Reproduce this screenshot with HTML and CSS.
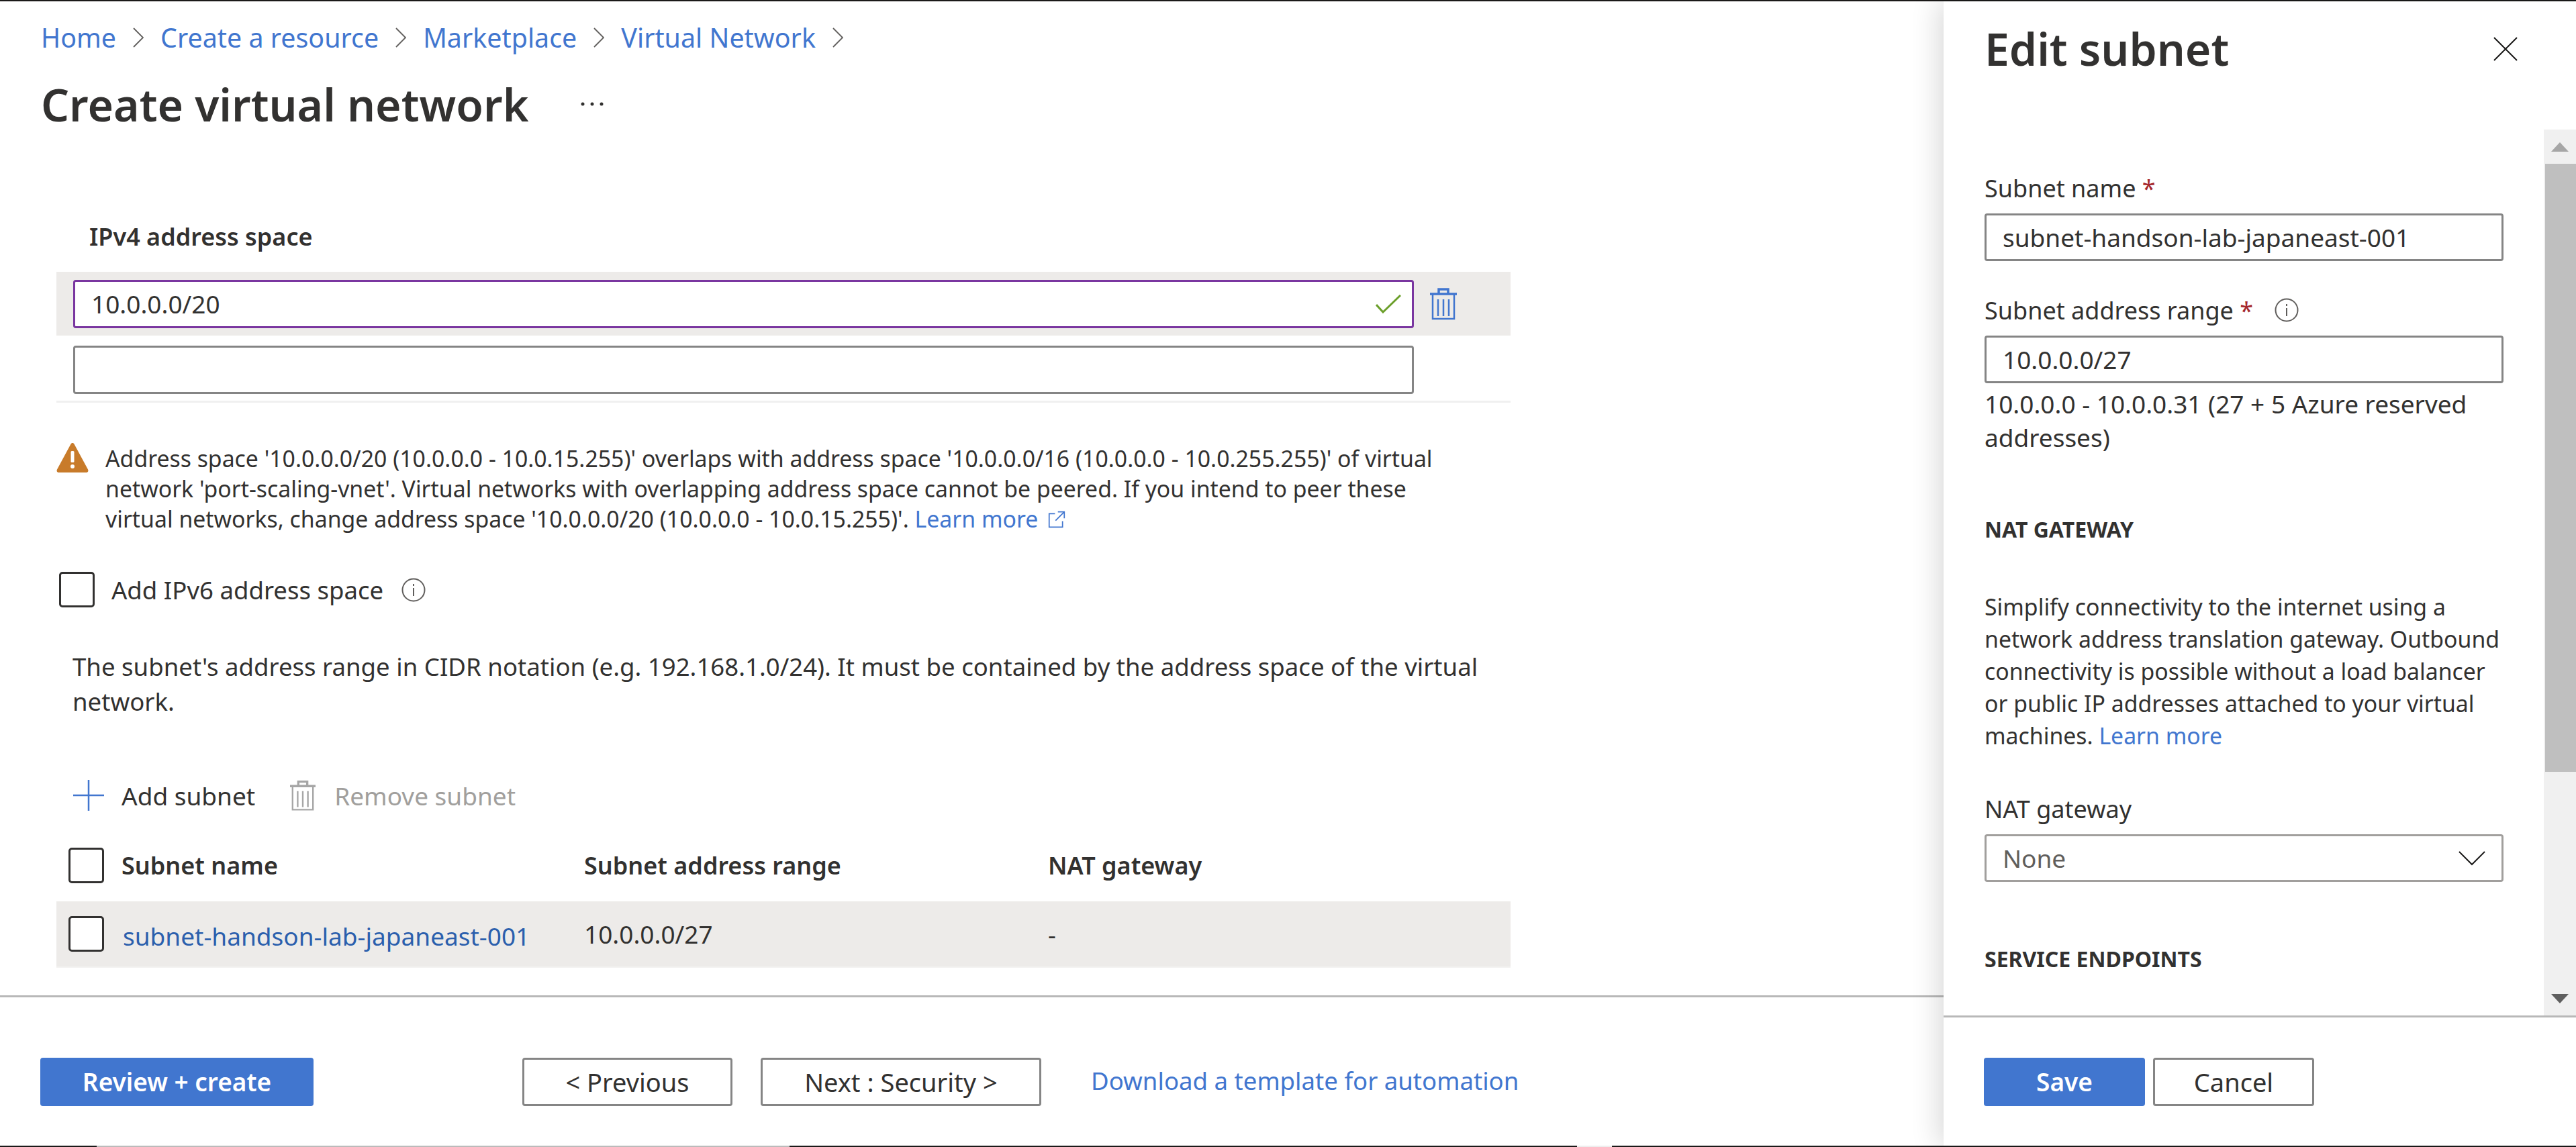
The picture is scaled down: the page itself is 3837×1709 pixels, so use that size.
FILE: index.html
```html
<!DOCTYPE html>
<html lang="en">
<head>
    <meta charset="UTF-8">
    <title>Create virtual network</title>
    <link rel="stylesheet" href="styles.css">
</head>
<body>
<div class="page">
    <div class="top-line"></div>
    <div class="workspace">
        <main class="main">
            <div class="main-body">
                <nav class="breadcrumb">
                    <a class="crumb">Home</a>
                    <svg class="crumb-sep" viewBox="0 0 16 30"><path d="M1 1l14 14L1 29"/></svg>
                    <a class="crumb">Create a resource</a>
                    <svg class="crumb-sep" viewBox="0 0 16 30"><path d="M1 1l14 14L1 29"/></svg>
                    <a class="crumb">Marketplace</a>
                    <svg class="crumb-sep" viewBox="0 0 16 30"><path d="M1 1l14 14L1 29"/></svg>
                    <a class="crumb">Virtual Network</a>
                    <svg class="crumb-sep" viewBox="0 0 16 30"><path d="M1 1l14 14L1 29"/></svg>
                </nav>

                <div class="title-row">
                    <h1 class="page-title">Create virtual network</h1>
                    <svg class="more" viewBox="0 0 34 6"><circle cx="3" cy="3" r="2.5"/><circle cx="17" cy="3" r="2.5"/><circle cx="31" cy="3" r="2.5"/></svg>
                </div>

                <div class="address-label">IPv4 address space</div>
                <div class="address-row address-row-active">
                    <div class="field field-active">
                        <span>10.0.0.0/20</span>
                        <svg class="check" viewBox="0 0 38 28"><path d="M1 15l10 11L37 1"/></svg>
                    </div>
                    <svg class="trash trash-blue" viewBox="0 0 40 48"><path class="lid" d="M0 9h40M13 8V2h14v6"/><path d="M4 10v36h32V10M12 17v25M20 17v25M28 17v25"/></svg>
                </div>
                <div class="address-row">
                    <div class="field"></div>
                </div>

                <div class="warning">
                    <svg class="warning-icon" viewBox="0 0 48 44">
                        <path d="M24 0c1 0 2 .6 3 2.500l20 37c1 2 .3 4.500-2.500 4.500h-41C.8 44 0 41.500 1 39.500l20-37C22 .6 23 0 24 0z"/>
                        <rect x="21.500" y="12" width="5" height="17" rx="1.500"/>
                        <circle cx="24" cy="35" r="3"/>
                    </svg>
                    <p class="warning-text">Address space '10.0.0.0/20 (10.0.0.0 - 10.0.15.255)' overlaps with address space '10.0.0.0/16 (10.0.0.0 - 10.0.255.255)' of virtual<br>network 'port-scaling-vnet'. Virtual networks with overlapping address space cannot be peered. If you intend to peer these<br>virtual networks, change address space '10.0.0.0/20 (10.0.0.0 - 10.0.15.255)'. <a class="link">Learn more</a>
                        <svg class="external" viewBox="0 0 30 30"><path d="M12 5H2v23h23V18M17 2h11v11M28 2L13 17"/></svg>
                    </p>
                </div>

                <div class="ipv6-row">
                    <span class="checkbox"></span>
                    <span class="ipv6-label">Add IPv6 address space</span>
                    <svg class="info" viewBox="0 0 36 36"><circle cx="18" cy="18" r="16.500"/><path d="M18 15v12M18 9v3"/></svg>
                </div>

                <p class="hint">The subnet's address range in CIDR notation (e.g. 192.168.1.0/24). It must be contained by the address space of the virtual<br>network.</p>

                <div class="toolbar">
                    <span class="tool">
                        <svg class="plus" viewBox="0 0 46 46"><path d="M23 0v46M0 23h46"/></svg>
                        Add subnet
                    </span>
                    <span class="tool tool-disabled">
                        <svg class="trash trash-grey" viewBox="0 0 40 48"><path class="lid" d="M0 9h40M13 8V2h14v6"/><path d="M4 10v36h32V10M12 17v25M20 17v25M28 17v25"/></svg>
                        Remove subnet
                    </span>
                </div>

                <div class="subnet-grid subnet-head">
                    <span class="checkbox"></span>
                    <span>Subnet name</span>
                    <span>Subnet address range</span>
                    <span>NAT gateway</span>
                </div>
                <div class="subnet-grid subnet-row">
                    <span class="checkbox"></span>
                    <a class="subnet-link">subnet-handson-lab-japaneast-001</a>
                    <span>10.0.0.0/27</span>
                    <span>-</span>
                </div>
            </div>

            <footer class="main-footer">
                <button class="btn btn-primary btn-review">Review + create</button>
                <button class="btn btn-previous">&lt; Previous</button>
                <button class="btn btn-next">Next : Security &gt;</button>
                <a class="download-link">Download a template for automation</a>
            </footer>
        </main>

        <aside class="panel">
            <header class="panel-header">
                <h2 class="panel-title">Edit subnet</h2>
                <svg class="close" viewBox="0 0 36 36"><path d="M1 1l34 34M35 1L1 35"/></svg>
            </header>

            <div class="panel-scroll">
                <div class="panel-body">
                    <div class="form-label">Subnet name <span class="required">*</span></div>
                    <div class="field panel-field">subnet-handson-lab-japaneast-001</div>

                    <div class="form-label form-label-next">Subnet address range <span class="required">*</span>
                        <svg class="info info-panel" viewBox="0 0 36 36"><circle cx="18" cy="18" r="16.500"/><path d="M18 15v12M18 9v3"/></svg>
                    </div>
                    <div class="field panel-field">10.0.0.0/27</div>
                    <p class="helper">10.0.0.0 - 10.0.0.31 (27 + 5 Azure reserved addresses)</p>

                    <h3 class="section-title section-nat">NAT GATEWAY</h3>
                    <p class="section-text">Simplify connectivity to the internet using a<br>network address translation gateway. Outbound<br>connectivity is possible without a load balancer<br>or public IP addresses attached to your virtual<br>machines. <a class="link">Learn more</a></p>

                    <div class="form-label form-label-nat">NAT gateway</div>
                    <div class="field panel-field field-select">
                        <span>None</span>
                        <svg class="chevron" viewBox="0 0 40 22"><path d="M1 1l19 19L39 1"/></svg>
                    </div>

                    <h3 class="section-title section-endpoints">SERVICE ENDPOINTS</h3>
                </div>
                <div class="scrollbar">
                    <div class="scroll-btn"><span class="arrow-up"></span></div>
                    <div class="scroll-thumb"></div>
                    <div class="scroll-track"></div>
                    <div class="scroll-btn"><span class="arrow-down"></span></div>
                </div>
            </div>

            <footer class="panel-footer">
                <button class="btn btn-primary btn-panel">Save</button>
                <button class="btn btn-panel">Cancel</button>
            </footer>
        </aside>
    </div>
    <div class="bottom-line"></div>
</div>
</body>
</html>
```

FILE: styles.css
```css
/* General page styling */
* {
    box-sizing: border-box;
}

body {
    margin: 0;
    background-color: white;
    color: #323130;
    font-family: 'Noto Sans', sans-serif;
    font-size: 36px;
    overflow: hidden;
}

p, h1, h2, h3 {
    margin: 0;
}

.page {
    display: flex;
    flex-direction: column;
    width: 3837px;
    height: 1709px;
}

.top-line {
    height: 2px;
    background-color: #1b1a19;
}

.bottom-line {
    height: 2px;
    background: linear-gradient(to right, #1b1a19 144px, #bbb 144px, #bbb 1176px, #1b1a19 1176px, #1b1a19 2349px, #eee 2349px, #eee 2401px, #1b1a19 2401px);
}

.workspace {
    flex: 1;
    display: flex;
    min-height: 0;
}

.link, .crumb, .download-link {
    color: #4176cf;
}

/* Main column */
.main {
    flex: 1;
    display: flex;
    flex-direction: column;
}

.main-body {
    flex: 1;
    padding-left: 84px;
}

.breadcrumb {
    display: flex;
    align-items: center;
    gap: 25px;
    height: 40px;
    margin: 34px 0 0 -23px;
    font-size: 39.400px;
}

.crumb-sep {
    width: 16px;
    height: 30px;
    fill: none;
    stroke: #605e5c;
    stroke-width: 1.8;
}

.title-row {
    display: flex;
    align-items: center;
    height: 80px;
    margin: 39px 0 0 -23px;
}

.page-title {
    width: 804px;
    font-size: 66px;
    font-weight: 600;
    white-space: nowrap;
}

.more {
    width: 34px;
    height: 6px;
    fill: #323130;
}

.address-label {
    height: 40px;
    line-height: 40px;
    margin: 138px 0 0 49px;
    font-weight: 600;
}

.address-row {
    display: flex;
    align-items: flex-start;
    gap: 24px;
    width: 2166px;
    height: 100px;
    padding: 15px 0 0 25px;
    border-bottom: 3px solid #f0f0f0;
}

.address-row-active {
    align-items: center;
    height: 95px;
    margin-top: 32px;
    padding: 0 0 0 25px;
    border-bottom: none;
    background-color: #edebe9;
}

.field {
    display: flex;
    align-items: center;
    justify-content: space-between;
    width: 1997px;
    height: 72px;
    padding: 0 24px;
    border: 3px solid #858585;
    border-radius: 4px;
    background-color: white;
    font-size: 37px;
    white-space: nowrap;
}

.field-active {
    padding-right: 16px;
    border-color: #7a36a0;
}

.check {
    width: 38px;
    height: 28px;
    fill: none;
    stroke: #6b9f2a;
    stroke-width: 3;
}

.trash {
    fill: none;
    stroke-width: 2.500;
}

.trash-blue {
    width: 40px;
    height: 48px;
    stroke: #4176cf;
}

.trash-grey {
    width: 38px;
    height: 47px;
    stroke: #a6a6a6;
}

.trash .lid {
    stroke-width: 3.500;
}

.warning {
    display: flex;
    gap: 25px;
    margin-top: 61px;
}

.warning-icon {
    width: 48px;
    height: 44px;
    margin-top: -1px;
    fill: #c87b2a;
}

.warning-icon rect, .warning-icon circle {
    fill: white;
}

.warning-text {
    font-size: 33.800px;
    line-height: 45px;
    white-space: nowrap;
}

.external {
    width: 26px;
    height: 26px;
    margin-left: 6px;
    vertical-align: -1px;
    fill: none;
    stroke: #4176cf;
    stroke-width: 2;
}

.ipv6-row {
    display: flex;
    align-items: center;
    height: 53px;
    margin: 56px 0 0 4px;
    font-size: 36.600px;
}

.checkbox {
    display: block;
    width: 53px;
    height: 53px;
    border: 3.500px solid #323130;
    border-radius: 5px;
    background-color: white;
}

.ipv6-label {
    margin-left: 25px;
}

.info {
    width: 36px;
    height: 36px;
    margin-left: 27px;
    fill: none;
    stroke: #605e5c;
    stroke-width: 2;
}

.hint {
    margin: 62px 0 0 24px;
    font-size: 36.600px;
    line-height: 52px;
    white-space: nowrap;
}

.toolbar {
    display: flex;
    align-items: center;
    gap: 52px;
    height: 48px;
    margin: 90px 0 0 25px;
    font-size: 37px;
}

.tool {
    display: flex;
    align-items: center;
    gap: 26px;
}

.tool-disabled {
    gap: 28px;
    color: #a19f9d;
}

.plus {
    width: 46px;
    height: 46px;
    stroke: #4176cf;
    stroke-width: 2.500;
}

.subnet-grid {
    display: grid;
    align-items: center;
    width: 2166px;
    padding-left: 18px;
}

.subnet-head {
    height: 54px;
    margin-top: 53px;
    font-weight: 600;
    grid-template-columns: 79px 689px 691px 1fr;
}

.subnet-row {
    height: 99px;
    margin-top: 27px;
    border-bottom: 2px solid #f3f2f1;
    background-color: #edebe9;
    grid-template-columns: 81px 687px 691px 1fr;
    font-size: 37px;
}

.subnet-link {
    color: #2b5fad;
    padding-top: 6px;
}

/* Bottom bar of the main column */
.main-footer {
    display: flex;
    align-items: flex-start;
    height: 224px;
    padding: 90px 0 0 60px;
    border-top: 3px solid #b8b8b8;
}

.btn {
    height: 72px;
    padding: 0;
    border: 3px solid #858585;
    border-radius: 4px;
    background-color: white;
    color: #323130;
    font-family: inherit;
    font-size: 38px;
    line-height: 60px;
}

.btn-primary {
    border: none;
    background-color: #4176cf;
    color: white;
    font-size: 37px;
    font-weight: 600;
}

.btn-review {
    width: 407px;
}

.btn-previous {
    width: 313px;
    margin-left: 311px;
}

.btn-next {
    width: 418px;
    margin-left: 42px;
}

.download-link {
    margin: 9px 0 0 74px;
    font-size: 36.600px;
    white-space: nowrap;
}

/* Edit subnet side panel */
.panel {
    position: relative;
    display: flex;
    flex-direction: column;
    width: 942px;
    background-color: white;
    box-shadow: -6px 0 40px rgba(0, 0, 0, 0.16);
}

.panel-header {
    display: flex;
    align-items: center;
    justify-content: space-between;
    height: 191px;
    padding: 0 87px 52px 61px;
    flex-shrink: 0;
}

.panel-title {
    font-size: 66px;
    font-weight: 600;
}

.close {
    width: 36px;
    height: 36px;
    margin-top: 3px;
    stroke: #1b1a19;
    stroke-width: 2;
}

.panel-scroll {
    flex: 1;
    display: flex;
    min-height: 0;
}

.panel-body {
    flex: 1;
    padding: 67px 0 0 61px;
    overflow: hidden;
}

.form-label {
    display: flex;
    align-items: center;
    height: 40px;
    white-space: pre;
}

.form-label-next {
    margin-top: 53px;
}

.form-label-nat {
    margin-top: 65px;
}

.required {
    color: #a4262c;
}

.info-panel {
    margin-left: 32px;
}

.panel-field {
    width: 773px;
    height: 71px;
    margin-top: 18px;
}

.helper {
    width: 773px;
    margin-top: 6px;
    font-size: 37px;
    line-height: 50px;
}

.section-title {
    height: 40px;
    line-height: 40px;
    font-size: 32px;
    font-weight: 700;
}

.section-nat {
    margin-top: 92px;
}

.section-endpoints {
    margin-top: 95px;
}

.section-text {
    margin-top: 71px;
    font-size: 33.800px;
    line-height: 48px;
    white-space: nowrap;
}

.field-select {
    border-color: #a19f9d;
    color: #605e5c;
    padding-right: 24px;
}

.chevron {
    width: 40px;
    height: 22px;
    fill: none;
    stroke: #1b1a19;
    stroke-width: 2;
}

.scrollbar {
    display: flex;
    flex-direction: column;
    width: 48px;
    background-color: #f0f0f0;
}

.scroll-btn {
    display: flex;
    align-items: center;
    justify-content: center;
    height: 51px;
    flex-shrink: 0;
}

.arrow-up {
    border-left: 13px solid transparent;
    border-right: 13px solid transparent;
    border-bottom: 14px solid #a6a6a6;
}

.arrow-down {
    border-left: 13px solid transparent;
    border-right: 13px solid transparent;
    border-top: 14px solid #5f5f5f;
}

.scroll-thumb {
    height: 906px;
    margin-left: 2px;
    background-color: #bfbfbf;
}

.scroll-track {
    flex: 1;
}

.panel-footer {
    display: flex;
    gap: 12px;
    height: 194px;
    padding: 60px 0 0 60px;
    border-top: 3px solid #b8b8b8;
    flex-shrink: 0;
}

.btn-panel {
    width: 240px;
}
```
